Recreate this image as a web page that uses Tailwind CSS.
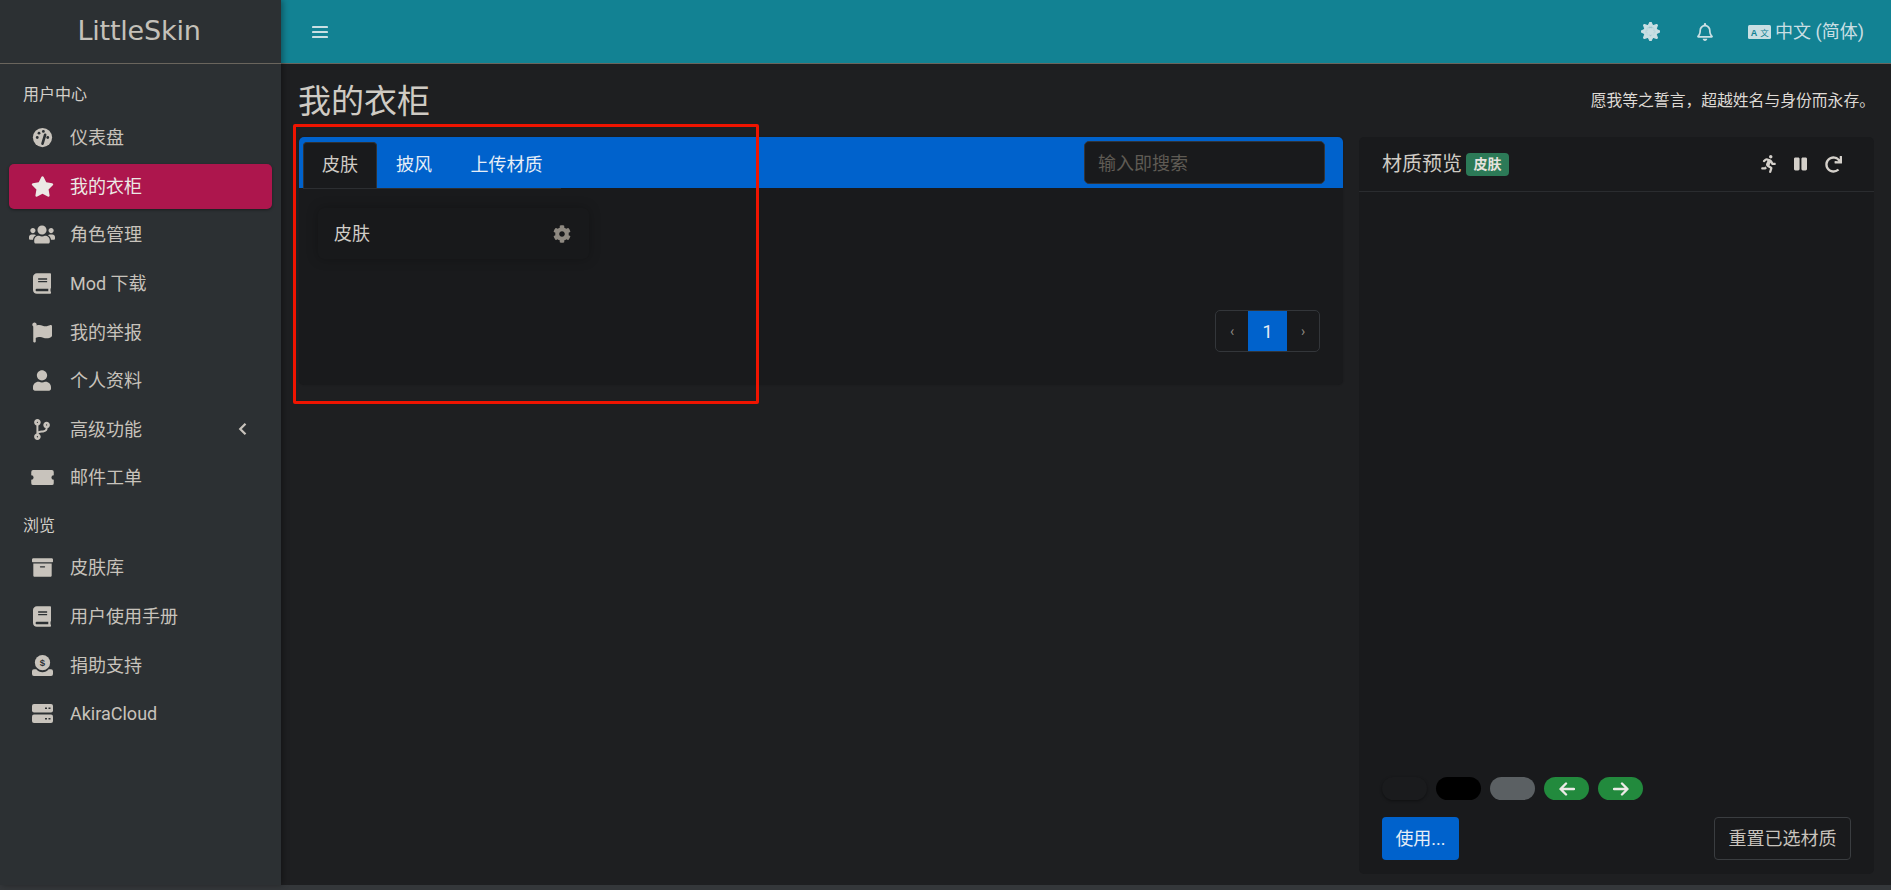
<!DOCTYPE html>
<html lang="zh-CN">
<head>
  <meta charset="UTF-8">
  <title>我的衣柜 - LittleSkin</title>
  <script src="https://cdn.jsdelivr.net/npm/@tailwindcss/browser@4"></script>
</head>
<body class="bg-[#34373a] font-['Roboto','Noto_Sans_CJK_SC',sans-serif] text-[#c8c3bc] overflow-hidden">
  <div class="relative w-[1891px] h-[890px] pb-[5px]">
    <div class="flex h-[885px]">

      <!-- sidebar -->
      <aside class="w-[281px] shrink-0 bg-[#2c3033] shadow-[2px_0_6px_rgba(0,0,0,0.35)] z-10">
        <div class="h-[64px] border-b border-[#6a655d] flex items-center justify-center pb-[1px]">
          <span class="font-['DejaVu_Sans',sans-serif] text-[27px] tracking-[-0.2px] text-[#c4c0b9] -ml-[3px]">LittleSkin</span>
        </div>
        <nav class="px-[9px]">
          <div class="h-[51px] pt-[19px] pl-[14px] text-[16px] leading-[24px] text-[#d3cfc9]">用户中心</div>
          <a class="flex items-center h-[45.4px] mb-[3.2px] pl-[21px] text-[18px]">
            <span class="w-[24px] mr-[16px] flex justify-center">
              <svg viewBox="0 0 24 24" class="w-[21px] h-[21px]"><circle cx="12" cy="12" r="11" fill="#c8c3bc"/><circle cx="6" cy="12" r="1.6" fill="#2c3033"/><circle cx="8" cy="7" r="1.6" fill="#2c3033"/><circle cx="13" cy="5" r="1.6" fill="#2c3033"/><circle cx="18" cy="12" r="1.6" fill="#2c3033"/><path d="M12 19l3-10" stroke="#2c3033" stroke-width="3" stroke-linecap="round"/></svg>
            </span>仪表盘</a>
          <a class="flex items-center h-[45.4px] mb-[3.2px] pl-[21px] text-[18px] bg-[#ad164d] rounded-[5px] text-[#ece9e5] shadow-[0_1px_3px_rgba(0,0,0,0.4)]">
            <span class="w-[24px] mr-[16px] flex justify-center">
              <svg viewBox="0 0 576 512" class="w-[23px] h-[21px]" fill="currentColor"><path d="M259.3 17.8L194 150.2 47.9 171.5c-26.2 3.8-36.7 36.1-17.7 54.6l105.7 103-25 145.5c-4.5 26.3 23.2 46 46.4 33.7L288 439.6l130.7 68.7c23.2 12.2 50.9-7.4 46.4-33.7l-25-145.5 105.7-103c19-18.5 8.5-50.8-17.7-54.6L382 150.2 316.7 17.8c-11.7-23.6-45.6-23.9-57.4 0z"/></svg>
            </span>我的衣柜</a>
          <a class="flex items-center h-[45.4px] mb-[3.2px] pl-[21px] text-[18px]">
            <span class="w-[24px] mr-[16px] flex justify-center">
              <svg viewBox="0 0 640 512" class="w-[26px] h-[21px] shrink-0" fill="currentColor"><path d="M96 224c35.3 0 64-28.7 64-64s-28.7-64-64-64-64 28.7-64 64 28.7 64 64 64zm448 0c35.3 0 64-28.7 64-64s-28.7-64-64-64-64 28.7-64 64 28.7 64 64 64zm32 32h-64c-17.6 0-33.5 7.1-45.1 18.6 40.3 22.1 68.9 62 75.1 109.4h66c17.7 0 32-14.3 32-32v-32c0-35.3-28.7-64-64-64zm-256 0c61.9 0 112-50.1 112-112S381.9 32 320 32 208 82.1 208 144s50.1 112 112 112zm76.8 32h-8.3c-20.8 10-43.9 16-68.5 16s-47.6-6-68.5-16h-8.3C179.6 288 128 339.6 128 403.2V432c0 26.5 21.5 48 48 48h288c26.5 0 48-21.5 48-48v-28.8c0-63.6-51.6-115.2-115.2-115.2zm-223.7-13.4C161.5 263.1 145.6 256 128 256H64c-35.3 0-64 28.7-64 64v32c0 17.7 14.3 32 32 32h65.9c6.3-47.4 34.9-87.3 75.2-109.4z"/></svg>
            </span>角色管理</a>
          <a class="flex items-center h-[45.4px] mb-[3.2px] pl-[21px] text-[18px]">
            <span class="w-[24px] mr-[16px] flex justify-center">
              <svg viewBox="0 0 448 512" class="w-[18px] h-[21px]" fill="currentColor"><path d="M448 360V24c0-13.3-10.7-24-24-24H96C43 0 0 43 0 96v320c0 53 43 96 96 96h328c13.3 0 24-10.7 24-24v-16c0-7.5-3.5-14.3-8.9-18.7-4.2-15.4-4.2-59.3 0-74.7 5.4-4.3 8.9-11.1 8.9-18.6zM128 134c0-3.3 2.7-6 6-6h212c3.3 0 6 2.7 6 6v20c0 3.3-2.7 6-6 6H134c-3.3 0-6-2.7-6-6v-20zm0 64c0-3.3 2.7-6 6-6h212c3.3 0 6 2.7 6 6v20c0 3.3-2.7 6-6 6H134c-3.3 0-6-2.7-6-6v-20zm253.4 250H96c-17.7 0-32-14.3-32-32 0-17.6 14.4-32 32-32h285.4c-1.9 17.1-1.9 46.9 0 64z"/></svg>
            </span>Mod 下载</a>
          <a class="flex items-center h-[45.4px] mb-[3.2px] pl-[21px] text-[18px]">
            <span class="w-[24px] mr-[16px] flex justify-center">
              <svg viewBox="0 0 512 512" class="w-[20px] h-[21px]" fill="currentColor"><path d="M349.565 98.783C295.978 98.783 251.721 64 184.348 64c-24.955 0-47.309 4.384-68.045 12.013a55.947 55.947 0 0 0 3.586-23.562C118.117 24.015 94.806 1.206 66.338.048 34.345-1.254 8 24.296 8 56c0 19.026 9.497 35.825 24 45.945V488c0 13.255 10.745 24 24 24h16c13.255 0 24-10.745 24-24v-94.4c28.311-12.064 63.582-22.122 114.435-22.122 53.588 0 97.844 34.783 165.217 34.783 48.169 0 86.667-16.294 122.505-40.858C506.84 359.452 512 349.571 512 339.045v-243.1c0-23.393-24.269-38.87-45.485-29.016-34.338 15.948-76.454 31.854-116.95 31.854z"/></svg>
            </span>我的举报</a>
          <a class="flex items-center h-[45.4px] mb-[3.2px] pl-[21px] text-[18px]">
            <span class="w-[24px] mr-[16px] flex justify-center">
              <svg viewBox="0 0 448 512" class="w-[18px] h-[21px]" fill="currentColor"><path d="M224 256c70.7 0 128-57.3 128-128S294.7 0 224 0 96 57.3 96 128s57.3 128 128 128zm89.6 32h-16.7c-22.2 10.2-46.9 16-72.9 16s-50.6-5.8-72.9-16h-16.7C60.2 288 0 348.2 0 422.4V464c0 26.5 21.5 48 48 48h352c26.5 0 48-21.5 48-48v-41.6c0-74.2-60.2-134.4-134.4-134.4z"/></svg>
            </span>个人资料</a>
          <a class="flex items-center h-[45.4px] mb-[3.2px] pl-[21px] text-[18px]">
            <span class="w-[24px] mr-[16px] flex justify-center">
              <svg viewBox="0 0 384 512" class="w-[18px] h-[21px]" fill="currentColor"><path d="M384 144c0-44.2-35.8-80-80-80s-80 35.8-80 80c0 36.4 24.3 67.1 57.5 76.8-.6 16.1-4.2 28.5-11 36.9-15.4 19.2-49.3 22.4-85.2 25.7-28.2 2.6-57.4 5.4-81.3 16.9v-144c32.5-10.2 56-40.5 56-76.3 0-44.2-35.8-80-80-80S0 35.8 0 80c0 35.8 23.5 66.1 56 76.3v199.3C23.5 365.9 0 396.2 0 432c0 44.2 35.8 80 80 80s80-35.8 80-80c0-34-21.2-63.1-51.2-74.6 3.1-5.2 7.8-9.8 14.9-13.4 16.2-8.2 40.4-10.4 66.1-12.8 42.2-3.9 90-8.4 118.2-43.4 14-17.4 21.1-39.8 21.6-67.9 31.6-10.8 54.4-40.7 54.4-75.9zM80 64c8.8 0 16 7.2 16 16s-7.2 16-16 16-16-7.2-16-16 7.2-16 16-16zm0 384c-8.8 0-16-7.2-16-16s7.2-16 16-16 16 7.2 16 16-7.2 16-16 16zm224-320c8.8 0 16 7.2 16 16s-7.2 16-16 16-16-7.2-16-16 7.2-16 16-16z"/></svg>
            </span><span class="flex-1">高级功能</span>
            <svg viewBox="0 0 12 18" class="w-[9px] h-[14px] mr-[25px]" fill="none" stroke="currentColor" stroke-width="3"><path d="M10 2L3 9l7 7"/></svg>
          </a>
          <a class="flex items-center h-[45.4px] mb-[3.2px] pl-[21px] text-[18px]">
            <span class="w-[24px] mr-[16px] flex justify-center">
              <svg viewBox="0 0 24 16" class="w-[23px] h-[15px]" fill="currentColor"><path d="M2 0h20a2 2 0 0 1 2 2v3.5a2.5 2.5 0 0 0 0 5V14a2 2 0 0 1-2 2H2a2 2 0 0 1-2-2v-3.5a2.5 2.5 0 0 0 0-5V2a2 2 0 0 1 2-2z"/></svg>
            </span>邮件工单</a>

          <div class="h-[41.6px] pt-[10px] pl-[14px] text-[16px] leading-[24px] text-[#d3cfc9]">浏览</div>
          <a class="flex items-center h-[45.4px] mb-[3.2px] pl-[21px] text-[18px]">
            <span class="w-[24px] mr-[16px] flex justify-center">
              <svg viewBox="0 0 512 512" class="w-[21px] h-[21px]" fill="currentColor"><path d="M32 448c0 17.7 14.3 32 32 32h384c17.7 0 32-14.3 32-32V160H32v288zm160-212c0-6.6 5.4-12 12-12h104c6.6 0 12 5.4 12 12v8c0 6.6-5.4 12-12 12H204c-6.6 0-12-5.4-12-12v-8zM480 32H32C14.3 32 0 46.3 0 64v48c0 8.8 7.2 16 16 16h480c8.8 0 16-7.2 16-16V64c0-17.7-14.3-32-32-32z"/></svg>
            </span>皮肤库</a>
          <a class="flex items-center h-[45.4px] mb-[3.2px] pl-[21px] text-[18px]">
            <span class="w-[24px] mr-[16px] flex justify-center">
              <svg viewBox="0 0 448 512" class="w-[18px] h-[21px]" fill="currentColor"><path d="M448 360V24c0-13.3-10.7-24-24-24H96C43 0 0 43 0 96v320c0 53 43 96 96 96h328c13.3 0 24-10.7 24-24v-16c0-7.5-3.5-14.3-8.9-18.7-4.2-15.4-4.2-59.3 0-74.7 5.4-4.3 8.9-11.1 8.9-18.6zM128 134c0-3.3 2.7-6 6-6h212c3.3 0 6 2.7 6 6v20c0 3.3-2.7 6-6 6H134c-3.3 0-6-2.7-6-6v-20zm0 64c0-3.3 2.7-6 6-6h212c3.3 0 6 2.7 6 6v20c0 3.3-2.7 6-6 6H134c-3.3 0-6-2.7-6-6v-20zm253.4 250H96c-17.7 0-32-14.3-32-32 0-17.6 14.4-32 32-32h285.4c-1.9 17.1-1.9 46.9 0 64z"/></svg>
            </span>用户使用手册</a>
          <a class="flex items-center h-[45.4px] mb-[3.2px] pl-[21px] text-[18px]">
            <span class="w-[24px] mr-[16px] flex justify-center">
              <svg viewBox="0 0 22 22" class="w-[21px] h-[21px]"><circle cx="11" cy="8" r="8" fill="#c8c3bc"/><text x="11" y="11.5" text-anchor="middle" font-size="10" font-weight="700" font-family="Liberation Sans" fill="#2c3033">$</text><path d="M2 15h2.5c1.5 2 4 3 6.5 3s5-1 6.5-3H20a2 2 0 0 1 2 2v3a2 2 0 0 1-2 2H2a2 2 0 0 1-2-2v-3a2 2 0 0 1 2-2z" fill="#c8c3bc"/></svg>
            </span>捐助支持</a>
          <a class="flex items-center h-[45.4px] mb-[3.2px] pl-[21px] text-[18px]">
            <span class="w-[24px] mr-[16px] flex justify-center">
              <svg viewBox="0 0 21 19" class="w-[21px] h-[19px]"><rect width="21" height="8.5" rx="2" fill="#c8c3bc"/><rect y="10.5" width="21" height="8.5" rx="2" fill="#c8c3bc"/><path d="M13 4.2h2M16.5 4.2h2M13 14.7h2M16.5 14.7h2" stroke="#2c3033" stroke-width="1.4"/></svg>
            </span>AkiraCloud</a>
        </nav>
      </aside>

      <div class="flex-1 flex flex-col min-w-0 bg-[#1e1f21]">
        <!-- top bar -->
        <header class="h-[64px] shrink-0 bg-[#128293] border-b border-[#6a655d] flex items-center text-[#c9dfe3]">
          <svg viewBox="0 0 16 14" class="w-[16px] h-[14px] ml-[31px]" fill="none" stroke="currentColor" stroke-width="2.2" stroke-linecap="round"><path d="M1 2h14M1 7h14M1 12h14"/></svg>
          <div class="ml-auto flex items-center pr-[27px] text-[18px]">
            <svg viewBox="0 0 512 512" class="w-[19px] h-[19px]" fill="currentColor" stroke="currentColor" stroke-width="30" stroke-linejoin="round"><path d="M256 160c-52.9 0-96 43.1-96 96s43.1 96 96 96 96-43.1 96-96-43.1-96-96-96zm246.4 80.5l-94.7-47.3 33.5-100.4c4.5-13.6-8.4-26.5-21.9-21.9l-100.4 33.5-47.4-94.8c-6.4-12.8-24.6-12.8-31 0l-47.3 94.7L92.7 70.8c-13.6-4.5-26.5 8.4-21.9 21.9l33.5 100.4-94.7 47.4c-12.8 6.4-12.8 24.6 0 31l94.7 47.3-33.5 100.5c-4.5 13.6 8.4 26.5 21.9 21.9l100.4-33.5 47.3 94.7c6.4 12.8 24.6 12.8 31 0l47.3-94.7 100.4 33.5c13.6 4.5 26.5-8.4 21.9-21.9l-33.5-100.4 94.7-47.3c13-6.5 13-24.7.2-31.1zm-155.9 106c-49.9 49.9-131.1 49.9-181 0-49.9-49.9-49.9-131.1 0-181 49.9-49.9 131.1-49.9 181 0 49.9 49.9 49.9 131.1 0 181z"/></svg>
            <svg viewBox="0 0 448 512" class="w-[16px] h-[18px] ml-[37px]" fill="currentColor"><path d="M439.39 362.29c-19.32-20.76-55.47-51.99-55.47-154.29 0-77.7-54.48-139.9-127.94-155.16V32c0-17.67-14.32-32-31.98-32s-31.98 14.33-31.98 32v20.84C118.56 68.1 64.08 130.3 64.08 208c0 102.3-36.15 133.53-55.47 154.29-6 6.45-8.66 14.16-8.61 21.71.11 16.4 12.98 32 32.1 32h383.8c19.12 0 32-15.6 32.1-32 .05-7.55-2.61-15.27-8.61-21.71zM67.53 368c21.22-27.97 44.42-74.33 44.53-159.42 0-.2-.06-.38-.06-.58 0-61.86 50.14-112 112-112s112 50.14 112 112c0 .2-.06.38-.06.58.11 85.1 23.31 131.46 44.53 159.42H67.53zM224 512c35.32 0 63.97-28.65 63.97-64H160.03c0 35.35 28.65 64 63.97 64z"/></svg>
            <svg viewBox="0 0 23 14" class="w-[23px] h-[14px] ml-[35px] mr-[4px]"><rect width="23" height="14" rx="1.5" fill="#c9dfe3"/><text x="6" y="10.5" text-anchor="middle" font-size="9" font-weight="700" font-family="Liberation Sans" fill="#128293">A</text><text x="16.5" y="10.5" text-anchor="middle" font-size="8.5" font-family="Noto Sans CJK SC" fill="#128293">文</text></svg>
            <span>中文 (简体)</span>
          </div>
        </header>

        <main class="flex-1 min-h-0 flex flex-col pl-[18px] pr-[17px] pb-[11px]">
          <div class="h-[73px] shrink-0 flex items-center justify-between">
            <h1 class="text-[33px] leading-[48px] font-normal text-[#cfcbc4] -ml-[1px] mt-[3px]">我的衣柜</h1>
            <p class="text-[15.8px] text-[#dedad5] mt-[1px] -mr-[1px]">愿我等之誓言，超越姓名与身份而永存。</p>
          </div>
          <div class="flex-1 min-h-0 flex gap-[16px]">

            <!-- closet card -->
            <section class="w-[1044px] h-[248px] bg-[#191a1c] rounded-[5px] shadow-[0_0_2px_rgba(0,0,0,0.2)]">
              <div class="h-[51px] bg-[#0062cc] rounded-t-[5px] flex items-end pl-[4px] pr-[18px] text-[18px]">
                <div class="h-[46px] w-[74px] pb-[2px] flex items-center justify-center bg-[#191a1c] rounded-t-[4px] border-t border-x border-[#2f3235] text-[#d0ccc6]">皮肤</div>
                <div class="h-[46px] w-[74px] pb-[2px] flex items-center justify-center text-[#e6eef7]">披风</div>
                <div class="h-[46px] w-[111px] pb-[2px] flex items-center justify-center text-[#e6eef7]">上传材质</div>
                <div class="ml-auto mb-[4px] w-[241px] h-[43px] pt-[1px] bg-[#191a1c] border border-[#30343a] rounded-[5px] flex items-center pl-[13px] text-[#5f5b54]">输入即搜索</div>
              </div>
              <div class="px-[4px]">
                <div class="w-[258px] h-[1px] bg-[#2c2e31]"></div>
              </div>
              <div class="ml-[19px] mt-[19px] w-[271px] h-[51px] rounded-[6px] bg-[#18191b] shadow-[0_0_12px_rgba(0,0,0,0.25)] flex items-center justify-between pl-[16px] pr-[18px] text-[18px] text-[#d0ccc6]">
                <span>皮肤</span>
                <svg viewBox="0 0 512 512" class="w-[18px] h-[18px] text-[#8e8981]" fill="currentColor"><path d="M487.4 315.7l-42.6-24.6c4.3-23.2 4.3-47 0-70.2l42.6-24.6c4.9-2.8 7.1-8.6 5.5-14-11.1-35.6-30-67.8-54.7-94.6-3.8-4.1-10-5.1-14.8-2.3L380.8 110c-17.9-15.4-38.5-27.3-60.8-35.1V25.8c0-5.6-3.9-10.5-9.4-11.7-36.7-8.2-74.3-7.8-109.2 0-5.5 1.2-9.4 6.1-9.4 11.7V75c-22.2 7.9-42.8 19.8-60.8 35.1L88.7 85.5c-4.9-2.8-11-1.9-14.8 2.3-24.7 26.7-43.6 58.9-54.7 94.6-1.7 5.4.6 11.2 5.5 14L67.3 221c-4.3 23.2-4.3 47 0 70.2l-42.6 24.6c-4.9 2.8-7.1 8.6-5.5 14 11.1 35.6 30 67.8 54.7 94.6 3.8 4.1 10 5.1 14.8 2.3l42.6-24.6c17.9 15.4 38.5 27.3 60.8 35.1v49.2c0 5.6 3.9 10.5 9.4 11.7 36.7 8.2 74.3 7.8 109.2 0 5.5-1.2 9.4-6.1 9.4-11.7v-49.2c22.2-7.9 42.8-19.8 60.8-35.1l42.6 24.6c4.9 2.8 11 1.9 14.8-2.3 24.7-26.7 43.6-58.9 54.7-94.6 1.5-5.5-.7-11.3-5.6-14.1zM256 336c-44.1 0-80-35.9-80-80s35.9-80 80-80 80 35.9 80 80-35.9 80-80 80z"/></svg>
              </div>
              <div class="flex justify-end mt-[51px] pr-[23px]">
                <div class="flex h-[42px] border border-[#33363a] rounded-[5px] overflow-hidden text-[#8e8981] text-[14px]">
                  <span class="w-[32px] flex items-center justify-center">‹</span>
                  <span class="w-[39px] flex items-center justify-center bg-[#0062cc] text-[#e8eef5] text-[18px]">1</span>
                  <span class="w-[32px] flex items-center justify-center">›</span>
                </div>
              </div>
            </section>

            <!-- preview card -->
            <section class="flex-1 bg-[#191a1c] rounded-[5px] flex flex-col">
              <div class="h-[55px] shrink-0 border-b border-[#2a2c2f] flex items-center pl-[23px] pr-[32px] mb-0">
                <span class="text-[20px] text-[#cfcbc4]">材质预览</span>
                <span class="ml-[4px] h-[23px] w-[43px] flex items-center justify-center rounded-[4px] bg-[#2c7a57] text-[#e6e3de] text-[14px] font-bold">皮肤</span>
                <div class="ml-auto flex items-center text-[#d4d0ca]">
                  <svg viewBox="0 0 416 512" class="w-[15px] h-[18px]" fill="currentColor"><path d="M272 96c26.51 0 48-21.49 48-48S298.51 0 272 0s-48 21.49-48 48 21.49 48 48 48zM113.69 317.47l-14.8 34.52H32c-17.67 0-32 14.33-32 32s14.33 32 32 32h77.45c19.25 0 36.58-11.44 44.11-29.09l8.79-20.52-10.67-6.3c-17.32-10.23-30.06-25.37-37.99-42.61zM384 223.99h-44.03l-26.06-53.25c-12.5-25.55-35.45-44.23-61.78-50.94l-71.08-21.14c-28.3-6.8-57.77-.55-80.84 17.14l-39.67 30.41c-14.03 10.75-16.69 30.83-5.92 44.86s30.84 16.66 44.86 5.92l39.69-30.41c7.67-5.89 17.44-8 25.27-6.14l14.7 4.37-37.46 87.39c-12.62 29.48-1.31 64.01 26.3 80.31l84.98 50.17-27.47 87.73c-5.28 16.86 4.11 34.81 20.97 40.09 3.19 1 6.41 1.48 9.58 1.48 13.61 0 26.23-8.77 30.52-22.45l31.64-101.06c5.91-20.77-2.89-43.08-21.64-54.39l-61.24-36.14 31.31-78.28 20.27 41.43c8 16.34 24.92 26.89 43.11 26.89H384c17.67 0 32-14.33 32-32s-14.33-31.99-32-31.99z"/></svg>
                  <svg viewBox="0 0 448 512" class="w-[13px] h-[16px] ml-[18px]" fill="currentColor"><path d="M144 479H48c-26.5 0-48-21.5-48-48V79c0-26.5 21.5-48 48-48h96c26.5 0 48 21.5 48 48v352c0 26.5-21.5 48-48 48zm304-48V79c0-26.5-21.5-48-48-48h-96c-26.5 0-48 21.5-48 48v352c0 26.5 21.5 48 48 48h96c26.5 0 48-21.5 48-48z"/></svg>
                  <svg viewBox="0 0 512 512" class="w-[17px] h-[17px] ml-[18px]" fill="currentColor"><path d="M500.33 0h-47.41a12 12 0 0 0-12 12.57l4 82.76A247.42 247.42 0 0 0 256 8C119.34 8 7.9 119.53 8 256.19 8.1 393.07 119.1 504 256 504a247.1 247.1 0 0 0 166.18-63.91 12 12 0 0 0 .48-17.43l-34-34a12 12 0 0 0-16.38-.55A176 176 0 1 1 402.1 157.8l-101.53-4.87a12 12 0 0 0-12.57 12v47.41a12 12 0 0 0 12 12h200.33a12 12 0 0 0 12-12V12a12 12 0 0 0-12-12z"/></svg>
                </div>
              </div>
              <div class="flex-1"></div>
              <div class="flex gap-[9px] pl-[23px]">
                <span class="w-[45px] h-[23px] rounded-full bg-[#1a1b1d] shadow-[0_1px_3px_rgba(0,0,0,0.4)]"></span>
                <span class="w-[45px] h-[23px] rounded-full bg-black"></span>
                <span class="w-[45px] h-[23px] rounded-full bg-[#5b6063]"></span>
                <span class="w-[45px] h-[23px] rounded-full bg-[#228a3d] flex items-center justify-center">
                  <svg viewBox="0 0 16 14" class="w-[16px] h-[14px]" fill="none" stroke="#eceae6" stroke-width="2.4" stroke-linecap="round" stroke-linejoin="round"><path d="M15 7H2M7 1.5L1.5 7 7 12.5"/></svg>
                </span>
                <span class="w-[45px] h-[23px] rounded-full bg-[#228a3d] flex items-center justify-center">
                  <svg viewBox="0 0 16 14" class="w-[16px] h-[14px]" fill="none" stroke="#eceae6" stroke-width="2.4" stroke-linecap="round" stroke-linejoin="round"><path d="M1 7h13M9 1.5L14.5 7 9 12.5"/></svg>
                </span>
              </div>
              <div class="flex justify-between items-center mt-[17px] pl-[23px] pr-[23px] pb-[14px] text-[18px]">
                <span class="w-[77px] h-[43px] rounded-[4px] bg-[#0062cc] text-[#e6eef7] flex items-center justify-center">使用...</span>
                <span class="w-[137px] h-[43px] rounded-[4px] border border-[#3a3d40] text-[#c8c3bc] flex items-center justify-center">重置已选材质</span>
              </div>
            </section>
          </div>
        </main>
      </div>
    </div>

    <!-- red highlight drawn over the screenshot -->
    <div class="absolute left-[293px] top-[124px] w-[466px] h-[280px] border-[3px] border-[#f01400] rounded-[2px] z-20 pointer-events-none"></div>
  </div>
</body>
</html>
